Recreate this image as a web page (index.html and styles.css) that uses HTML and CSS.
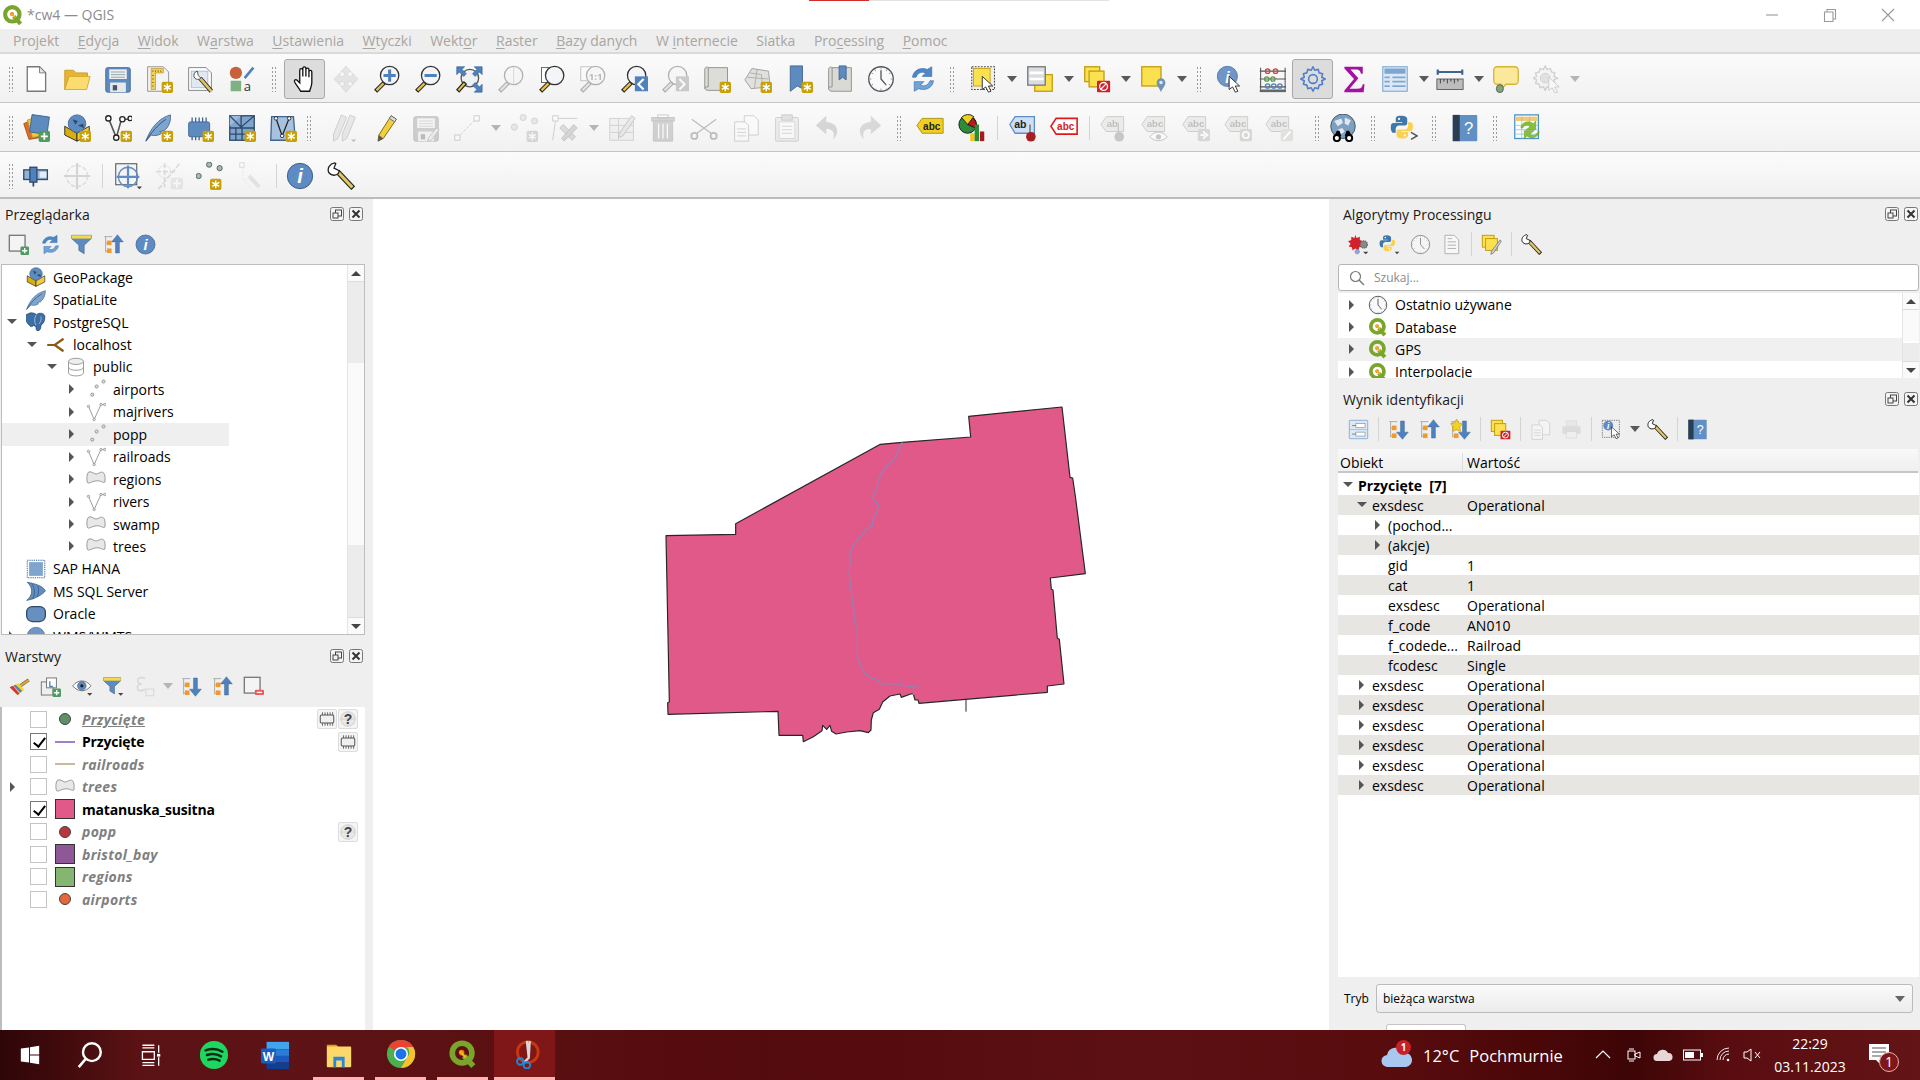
FILE: index.html
```html
<!DOCTYPE html>
<html lang="pl">
<head>
<meta charset="utf-8">
<title>*cw4 — QGIS</title>
<link rel="stylesheet" href="styles.css">
</head>
<body>
<svg class="defs" aria-hidden="true">
<defs>
<g id="bstar"><rect x="19" y="19" width="13" height="13" rx="2" fill="#c8a008"/><path d="M25.5 21v9M21.5 23.2l8 4.6M29.5 23.2l-8 4.6" stroke="#fff" stroke-width="1.7"/></g>
<g id="bplus"><rect x="19" y="19" width="13" height="13" rx="2" fill="#4f9a5e"/><path d="M25.5 21.5v8M21.5 25.5h8" stroke="#fff" stroke-width="2"/></g>
<g id="lensg"><path d="M13 20L3 30" stroke="#222" stroke-width="5"/><path d="M12 21L4 29" stroke="#e3c04f" stroke-width="2.6"/><circle cx="19" cy="12" r="10.5" fill="#f3f5f8" stroke="#333" stroke-width="1.5"/></g>
<g id="qlogo"><circle cx="15" cy="15" r="10.5" fill="none" stroke="#7aa52c" stroke-width="6"/><path d="M17 18l10 11" stroke="#7aa52c" stroke-width="6"/><circle cx="14.5" cy="14.5" r="3" fill="#ee7913"/><path d="M13 13l6 7" stroke="#f1b51e" stroke-width="2.5"/></g>

<symbol id="new" viewBox="0 0 32 32"><path d="M6 2h14l7 7v21H6z" fill="#fff" stroke="#777" stroke-width="1.5"/><path d="M20 2v7h7z" fill="#e6e6e6" stroke="#777"/></symbol>
<symbol id="open" viewBox="0 0 32 32"><path d="M2 28V6h10l3 3h13v6H6z" fill="#e7b531" stroke="#c79a20"/><path d="M2 28l5-15h24l-4 15z" fill="#fbdc6e" stroke="#d2a72c"/></symbol>
<symbol id="save" viewBox="0 0 32 32"><path d="M2 5a2 2 0 012-2h24a2 2 0 012 2v24a2 2 0 01-2 2H4a2 2 0 01-2-2z" fill="#5e8bbf" stroke="#3f6490"/><rect x="6" y="5" width="20" height="11" fill="#eef0f2"/><path d="M8 8h16M8 11h16M8 14h16" stroke="#8f98a3"/><rect x="7" y="20" width="18" height="11" fill="#e6e8ea"/><rect x="10" y="23" width="5" height="6" fill="#44566b"/></symbol>
<symbol id="layoutnew" viewBox="0 0 32 32"><path d="M3 2h18l6 6v22H3z" fill="#f4f4f4" stroke="#888"/><path d="M7 4h14v5H12v19H7z" fill="#f0cf5c" stroke="#b8962a" stroke-width=".8"/><path d="M9 6v2M12 6v2M15 6v2M18 6v2M8 12h2M8 16h2M8 20h2M8 24h2" stroke="#8a6f17"/><use href="#bstar"/></symbol>
<symbol id="layoutmgr" viewBox="0 0 32 32"><path d="M3 3h20l6 6v20H3z" fill="#fff" stroke="#777"/><rect x="6" y="7" width="19" height="19" fill="#dfe8f3" stroke="#a8b9cc"/><path d="M29 30L16 15" stroke="#333" stroke-width="5"/><path d="M29 30L16 15" stroke="#e3c660" stroke-width="3"/><path d="M13 7a5 5 0 00-3 8 5 5 0 007 0l-3-3z" fill="#fff" stroke="#444"/></symbol>
<symbol id="style" viewBox="0 0 32 32"><circle cx="9" cy="9" r="7" fill="#c8603a"/><path d="M19 15L29 3" stroke="#4f81bd" stroke-width="3"/><rect x="3" y="18" width="12" height="12" fill="#7fb083"/><text x="18" y="30" class="svt" font-size="15" fill="#333">a</text></symbol>
<symbol id="hand" viewBox="0 0 32 32"><path d="M11 30c-2-4-6-8-7-11-.6-2 1.5-3 3-1.5l3 3V6c0-2.5 3.5-2.5 3.5 0v7V4c0-2.5 3.5-2.5 3.5 0v9V5.5c0-2.5 3.5-2.5 3.5 0V14V8c0-2.5 3.3-2.5 3.3 0v12c0 4-1.5 6-2.5 10z" fill="#fff" stroke="#111" stroke-width="1.5"/></symbol>
<symbol id="pan" viewBox="0 0 32 32"><path d="M16 1l6 7h-4v5h5V9l7 7-7 7v-4h-5v5h4l-6 7-6-7h4v-5H9v4l-7-7 7-7v4h5V8h-4z" fill="#b8c6d6" stroke="#9aa7b5"/></symbol>
<symbol id="zin" viewBox="0 0 32 32"><use href="#lensg"/><path d="M19 5v14M12 12h14" stroke="#4f81bd" stroke-width="3.5"/></symbol>
<symbol id="zout" viewBox="0 0 32 32"><use href="#lensg"/><path d="M12 12h14" stroke="#4f81bd" stroke-width="3.5"/></symbol>
<symbol id="zfull" viewBox="0 0 32 32"><circle cx="17" cy="15" r="10" fill="#eef1f4" stroke="#555" stroke-width="1.5"/><path d="M12 20L3 30" stroke="#222" stroke-width="5"/><path d="M11 21L4 29" stroke="#e3c04f" stroke-width="2.5"/><path d="M2 2h9l-3 3 5 5-3 3-5-5-3 3zM31 2v9l-3-3-5 5-3-3 5-5-3-3zM31 31h-9l3-3-5-5 3-3 5 5 3-3z" fill="#4f81bd" stroke="#2f5e94" stroke-width=".7"/></symbol>
<symbol id="zsel" viewBox="0 0 32 32"><use href="#lensg"/><path d="M19 2v20" stroke="#999"/></symbol>
<symbol id="zlay" viewBox="0 0 32 32"><rect x="4" y="3" width="17" height="17" fill="#fff" stroke="#555"/><use href="#lensg"/></symbol>
<symbol id="z11" viewBox="0 0 32 32"><rect x="2" y="2" width="14" height="16" fill="#fff" stroke="#555"/><use href="#lensg"/><text x="19" y="17" text-anchor="middle" class="svt" font-size="11" font-weight="700" fill="#444">1:1</text></symbol>
<symbol id="zlast" viewBox="0 0 32 32"><use href="#lensg"/><rect x="17" y="13" width="15" height="17" fill="#4f81bd"/><path d="M27 16l-6 6 6 6" fill="none" stroke="#fff" stroke-width="2.5"/></symbol>
<symbol id="znext" viewBox="0 0 32 32"><use href="#lensg"/><rect x="17" y="13" width="15" height="17" fill="#4f81bd"/><path d="M21 16l6 6-6 6" fill="none" stroke="#fff" stroke-width="2.5"/></symbol>
<symbol id="map2d" viewBox="0 0 32 32"><path d="M2 5c0-3 4-3 4-2h22v26H6c-2 0-4-1-4-3z" fill="#dcdcd8" stroke="#8a8a86"/><path d="M6 3v22c-2 0-4 0-4 2" fill="none" stroke="#8a8a86"/><use href="#bstar"/></symbol>
<symbol id="map3d" viewBox="0 0 32 32"><path d="M9 4l19 3 2 18-22 2L1 17z" fill="#e0e0dc" stroke="#9a9a96"/><path d="M7 9l13 2 1 14M4 14l24 2M15 5l-3 21" stroke="#aaa" fill="none"/><use href="#bstar"/></symbol>
<symbol id="bmnew" viewBox="0 0 32 32"><path d="M6 1h14v26l-6-3-8 6z" fill="#5e8bbf" stroke="#3f6490"/><use href="#bstar"/></symbol>
<symbol id="bms" viewBox="0 0 32 32"><path d="M3 5c0-3 3-3 4-2h22v27H7c-2 0-4-1-4-3z" fill="#d9d9d5" stroke="#8a8a86"/><path d="M7 3v22c-2 0-4 0-4 2" fill="none" stroke="#8a8a86"/><path d="M15 1h8v16l-4-3-4 3z" fill="#5e8bbf" stroke="#3f6490"/></symbol>
<symbol id="clock" viewBox="0 0 32 32"><circle cx="16" cy="16" r="14" fill="#fafafa" stroke="#555" stroke-width="1.5"/><path d="M16 6v10l6 7" fill="none" stroke="#555" stroke-width="1.5"/><path d="M16 3v2M16 27v2M3 16h2M27 16h2M9 5l1 2M22 27l1 2M5 9l2 1M25 22l2 1M23 5l-1 2M10 27l-1 2M27 9l-2 1M7 22l-2 1" stroke="#6c96c6"/></symbol>
<symbol id="refresh" viewBox="0 0 32 32"><path d="M4 14C5 6 13 2 21 5l5-3v11H15l4-4C14 7 10 9 8 14z" fill="#4f88c4" stroke="#2f6aa8" stroke-width=".7"/><path d="M28 18c-1 8-9 12-17 9l-5 3V19h11l-4 4c5 2 9 0 11-5z" fill="#6fa4d8" stroke="#2f6aa8" stroke-width=".7"/></symbol>
<symbol id="select" viewBox="0 0 32 32"><rect x="2" y="2" width="26" height="26" fill="#eee" stroke="#444" stroke-dasharray="2 1.5" stroke-width="1.2"/><rect x="4" y="4" width="19" height="20" fill="#fbe14f" stroke="#c49c10"/><path d="M14 13v15l4-3 3 6 3-1-3-6h5z" fill="#fff" stroke="#222"/></symbol>
<symbol id="selattr" viewBox="0 0 32 32"><rect x="10" y="11" width="20" height="19" fill="#fbe14f" stroke="#c49c10" stroke-width="1.5"/><rect x="2" y="2" width="20" height="21" fill="#d9dde2" stroke="#777" stroke-width="1.5"/><path d="M4 9h16M4 16h16" stroke="#fff" stroke-width="3"/></symbol>
<symbol id="desel" viewBox="0 0 32 32"><rect x="2" y="2" width="17" height="17" fill="#fbe14f" stroke="#c49c10" stroke-width="1.5"/><rect x="7" y="7" width="17" height="18" fill="#fbe14f" stroke="#c49c10" stroke-width="1.5"/><rect x="16" y="18" width="15" height="13" rx="1" fill="#d0202a"/><circle cx="23.5" cy="24.5" r="4.5" fill="none" stroke="#fff" stroke-width="1.5"/><path d="M20 28l7-7" stroke="#fff" stroke-width="1.5"/></symbol>
<symbol id="selloc" viewBox="0 0 32 32"><rect x="2" y="2" width="22" height="22" fill="#fbe14f" stroke="#c49c10" stroke-width="1.5"/><path d="M24 31c-2-5-5-7-5-11a5 5 0 0110 0c0 4-3 6-5 11z" fill="#6f93b4"/><circle cx="24" cy="20" r="2" fill="#dfe8f0"/></symbol>
<symbol id="ident" viewBox="0 0 32 32"><circle cx="13" cy="13" r="11.5" fill="#6f96c6" stroke="#4f77a8"/><text x="13" y="20" text-anchor="middle" class="svs" font-size="18" font-style="italic" font-weight="700" fill="#fff">i</text><path d="M15 13v15l4-3 3 6 3-1-3-6h5z" fill="#fff" stroke="#222"/></symbol>
<symbol id="calc" viewBox="0 0 32 32"><rect x="2" y="28" width="30" height="3" fill="#666"/><path d="M3 28V3M31 28V3M2 7h30M2 16h30M2 25h30" stroke="#555" stroke-width="1.2"/><g fill="none" stroke-width="1.5"><circle cx="11" cy="7" r="2.5" stroke="#c44"/><circle cx="20" cy="7" r="2.5" stroke="#c44"/><circle cx="10" cy="16" r="2.5" stroke="#5a9a4d"/><circle cx="17" cy="16" r="2.5" stroke="#5a9a4d"/><circle cx="11" cy="24" r="2.5" stroke="#4f81bd"/><circle cx="18" cy="24" r="2.5" stroke="#4f81bd"/><circle cx="25" cy="24" r="2.5" stroke="#4f81bd"/></g></symbol>
<symbol id="gear" viewBox="0 0 32 32"><path d="M16 2l2 4 4-1 1 4 4 1-1 4 4 2-4 2 1 4-4 1-1 4-4-1-2 4-2-4-4 1-1-4-4-1 1-4-4-2 4-2-1-4 4-1 1-4 4 1z" fill="none" stroke="#4f81c9" stroke-width="1.8" stroke-linejoin="round"/><circle cx="16" cy="16" r="5" fill="none" stroke="#4f81c9" stroke-width="1.8"/></symbol>
<symbol id="sigma" viewBox="0 0 32 32"><path d="M5 2h21v8h-2c-1-4-2-5-6-5H12l9 10-10 12h9c4 0 5-1 6-5h2l-1 9H5v-2l11-13L5 4z" fill="#a3129e"/></symbol>
<symbol id="table" viewBox="0 0 32 32"><rect x="2" y="2" width="28" height="28" fill="#dce8f5" stroke="#7ea6cf" stroke-width="1.2"/><rect x="4" y="4" width="24" height="6" fill="#7ea6cf"/><path d="M4 14h6M13 14h15M4 19h6M13 19h15M4 24h6M13 24h15" stroke="#7ea6cf" stroke-width="2"/></symbol>
<symbol id="ruler" viewBox="0 0 32 32"><path d="M2 8h28M2 5v6M30 5v6" stroke="#3f6490" stroke-width="2.5"/><rect x="1" y="16" width="30" height="12" fill="#bdbdbd" stroke="#555"/><path d="M5 16v5M9 16v3M13 16v5M17 16v3M21 16v5M25 16v3" stroke="#333"/></symbol>
<symbol id="tip" viewBox="0 0 32 32"><path d="M6 2h20a4 4 0 014 4v12a4 4 0 01-4 4H16l-5 5v-5H6a4 4 0 01-4-4V6a4 4 0 014-4z" fill="#fbe89a" stroke="#d6b532" stroke-width="1.5"/><ellipse cx="9" cy="27" rx="4" ry="4.5" fill="#7fa878" stroke="#555"/></symbol>
<symbol id="actgear" viewBox="0 0 32 32"><path d="M14 1l2 4 4-1 1 4 4 1-1 4 4 2-4 2 1 4-4 1-1 4-4-1-2 4-2-4-4 1-1-4-4-1 1-4-4-2 4-2-1-4 4-1 1-4 4 1z" fill="#eee" stroke="#888" stroke-width="1.5"/><circle cx="14" cy="15" r="5.5" fill="#bbc" stroke="#888"/><path d="M18 14v15l4-3 3 6 3-1-3-6h5z" fill="#fff" stroke="#777"/></symbol>
<symbol id="dsm" viewBox="0 0 32 32"><path d="M2 11l14-6 4 22-12 2z" fill="#d9702a" stroke="#a54d16"/><path d="M6 7l15-5 4 22-13 3z" fill="#f1c644" stroke="#bb9420"/><rect x="10" y="2" width="20" height="20" transform="rotate(8 20 12)" fill="#5e8bbf" stroke="#3f6490"/><use href="#bplus"/></symbol>
<symbol id="gpknew" viewBox="0 0 32 32"><path d="M2 14l14 8v9L2 24z" fill="#d8ad10" stroke="#222"/><path d="M30 14l-14 8v9l14-7z" fill="#f0cb3a" stroke="#222"/><circle cx="16" cy="11" r="10" fill="#5e8bbf" stroke="#3f6490"/><path d="M11 6l6 2-3 4zM17 13l6-2 1 5z" fill="#2d4a6b"/><use href="#bstar"/></symbol>
<symbol id="vline" viewBox="0 0 32 32"><path d="M6 7l8 20L20 6h10" fill="none" stroke="#555" stroke-width="1.8"/><circle cx="5" cy="5" r="3" fill="#fff" stroke="#222" stroke-width="1.5"/><circle cx="14" cy="27" r="3" fill="#fff" stroke="#222" stroke-width="1.5"/><circle cx="21" cy="6" r="3" fill="#fff" stroke="#222" stroke-width="1.5"/><circle cx="30" cy="5" r="2.5" fill="#fff" stroke="#222" stroke-width="1.5"/><use href="#bstar"/></symbol>
<symbol id="feather" viewBox="0 0 32 32"><path d="M1 31C6 17 15 5 29 1c1 8-3 15-7 18l-5 1 2 2c-4 3-9 3-12 2z" fill="#7fa5cf" stroke="#3f6490"/><path d="M1 31C8 20 15 12 24 6" fill="none" stroke="#2d4a6b"/><use href="#bstar"/></symbol>
<symbol id="chip" viewBox="0 0 32 32"><rect x="3" y="9" width="24" height="17" rx="2" fill="#5e8bbf" stroke="#3f6490"/><path d="M7 4v5M11 4v5M15 4v5M19 4v5M23 4v5M7 26v4M11 26v4M15 26v4" stroke="#3f6490" stroke-width="1.5"/><use href="#bstar"/></symbol>
<symbol id="mesh" viewBox="0 0 32 32"><rect x="2" y="2" width="28" height="28" fill="#7fa5cf" stroke="#2d4a6b" stroke-width="1.5"/><path d="M2 2h13L2 14z" fill="#9dbbdb"/><path d="M2 2l13 13L30 2M15 2v13M2 16h28M16 16v14M9 16v14M2 23h28" stroke="#2d4a6b" stroke-width="1.5" fill="none"/><use href="#bstar"/></symbol>
<symbol id="vpoly" viewBox="0 0 32 32"><path d="M3 3h25l2 27H2z" fill="#a7c2df" stroke="#3f6490" stroke-width="1.5"/><path d="M8 5l7 20L23 5" fill="none" stroke="#222" stroke-width="1.5"/><circle cx="8" cy="5" r="2" fill="#fff" stroke="#222"/><circle cx="23" cy="5" r="2" fill="#fff" stroke="#222"/><circle cx="15" cy="25" r="2" fill="#fff" stroke="#222"/><use href="#bstar"/></symbol>
<symbol id="pencil" viewBox="0 0 32 32"><path d="M23 2l6 4-15 22-6 3 1-7z" fill="#f2cf3c" stroke="#6d5a10"/><path d="M23 2l6 4-2 3-6-4z" fill="#ddd" stroke="#666"/><path d="M9 24l5 4-6 3z" fill="#555"/></symbol>
<symbol id="pencils" viewBox="0 0 32 32"><path d="M13 1l6 3-10 24-5 3 0-8z" fill="#ccc" stroke="#777"/><path d="M23 1l6 3-10 24-5 3 0-8z" fill="#ccc" stroke="#777"/><path d="M24 29l3 3 3-3z" fill="#555"/></symbol>
<symbol id="saveed" viewBox="0 0 32 32"><use href="#save" width="32" height="32"/><path d="M28 16l3 2-9 12-4 1 1-4z" fill="#ddd" stroke="#666"/></symbol>
<symbol id="digiline" viewBox="0 0 32 32"><path d="M5 27L27 5" stroke="#777" stroke-dasharray="3 2"/><rect x="2" y="24" width="6" height="6" fill="#fff" stroke="#777"/><rect x="24" y="2" width="6" height="6" fill="#fff" stroke="#777"/></symbol>
<symbol id="points" viewBox="0 0 32 32"><g fill="#ccc" stroke="#888"><circle cx="15" cy="4" r="3.5"/><circle cx="28" cy="8" r="3.5"/><circle cx="5" cy="15" r="3.5"/></g><use href="#bstar"/></symbol>
<symbol id="vtool" viewBox="0 0 32 32"><rect x="2" y="2" width="6" height="6" fill="#fff" stroke="#777"/><path d="M5 8L2 30M8 5h22" stroke="#777"/><path d="M10 16l14 14 4-4L14 12z" fill="#aaa" stroke="#666"/><path d="M26 12L12 28l3 3 15-15z" fill="#999" stroke="#666"/></symbol>
<symbol id="tabpen" viewBox="0 0 32 32"><rect x="2" y="5" width="27" height="25" fill="#e8e4da" stroke="#8a8a80"/><path d="M2 13h27M2 21h27M12 5v25" stroke="#8a8a80"/><path d="M27 2l4 3-14 20-5 2 1-5z" fill="#ccc" stroke="#666"/></symbol>
<symbol id="trash" viewBox="0 0 32 32"><rect x="3" y="4" width="26" height="4" fill="#b88" stroke="#866"/><rect x="10" y="1" width="12" height="4" fill="none" stroke="#866"/><path d="M5 8h22v23H5z" fill="#a87" stroke="#765"/><path d="M11 11v17M16 11v17M21 11v17" stroke="#fff" stroke-width="1.5"/></symbol>
<symbol id="scis" viewBox="0 0 32 32"><path d="M2 6l22 16M30 6L8 22" stroke="#555" stroke-width="1.5"/><circle cx="5" cy="25" r="3.5" fill="none" stroke="#555" stroke-width="2"/><circle cx="27" cy="25" r="3.5" fill="none" stroke="#555" stroke-width="2"/></symbol>
<symbol id="copy" viewBox="0 0 32 32"><path d="M14 2h11l5 5v17H14z" fill="#fff" stroke="#777"/><path d="M3 9h12l4 4v18H3z" fill="#fff" stroke="#777"/><path d="M6 17h10M6 21h10M6 25h10" stroke="#888"/></symbol>
<symbol id="paste" viewBox="0 0 32 32"><rect x="3" y="4" width="26" height="27" rx="1" fill="#ddd" stroke="#777"/><rect x="10" y="1" width="12" height="6" fill="#bbb" stroke="#777"/><rect x="7" y="9" width="18" height="19" fill="#fff" stroke="#999"/><path d="M10 14h12M10 18h12M10 22h12" stroke="#888"/></symbol>
<symbol id="undo" viewBox="0 0 32 32"><path d="M14 2L2 13l12 10v-6c7 0 10 3 8 12 7-6 7-19-8-20z" fill="#a5988a"/></symbol>
<symbol id="redo" viewBox="0 0 32 32"><path d="M18 2l12 11-12 10v-6c-7 0-10 3-8 12-7-6-7-19 8-20z" fill="#a0a597"/></symbol>
<symbol id="abcy" viewBox="0 0 32 32"><path d="M7 5h24v17H7L1 13z" fill="#f1cf1f" stroke="#a58a10"/><text x="18" y="18" text-anchor="middle" class="svs" font-size="11.5" font-weight="700" fill="#222">abc</text></symbol>
<symbol id="pie" viewBox="0 0 32 32"><circle cx="11" cy="12" r="10" fill="#2e8b3a" stroke="#111"/><path d="M11 12V2a10 10 0 019 14z" fill="#b8191d" stroke="#111"/><path d="M11 12L4 4a10 10 0 0114-1z" fill="#f0d01c" stroke="#111"/><rect x="14" y="22" width="5" height="9" fill="#f5c518"/><rect x="19" y="12" width="5" height="19" fill="#2e8b3a"/><rect x="25" y="20" width="5" height="11" fill="#a8191d"/></symbol>
<symbol id="abpin" viewBox="0 0 32 32"><path d="M7 3h22v19H7L1 12z" fill="#cfe0f4" stroke="#5e8bc9" stroke-width="1.5"/><text x="13" y="16" text-anchor="middle" class="svs" font-size="12" font-weight="700" fill="#222">ab</text><path d="M24 12v10" stroke="#666" stroke-width="1.5"/><circle cx="25" cy="26" r="5.5" fill="#a52022"/></symbol>
<symbol id="abcr" viewBox="0 0 32 32"><path d="M7 5h24v18H7L1 14z" fill="#fff" stroke="#e01818" stroke-width="1.8"/><text x="18" y="18.5" text-anchor="middle" class="svs" font-size="11.5" font-weight="700" fill="#e01818">abc</text></symbol>
<symbol id="abg1" viewBox="0 0 32 32"><path d="M7 3h20v17H7L1 12z" fill="#e6e4dc" stroke="#aaa"/><text x="14" y="15" text-anchor="middle" class="svs" font-size="11" font-weight="700" fill="#999">ab</text><path d="M21 10v12" stroke="#aaa" stroke-width="1.5"/><circle cx="22" cy="26" r="5.5" fill="#aaa"/></symbol>
<symbol id="abg2" viewBox="0 0 32 32"><path d="M7 3h20v17H7L1 12z" fill="#e6e4dc" stroke="#aaa"/><text x="16" y="15" text-anchor="middle" class="svs" font-size="11" font-weight="700" fill="#999">abc</text><path d="M10 26c6-7 14-7 20 0-6 6-14 6-20 0z" fill="#fff" stroke="#999"/><circle cx="20" cy="26" r="3" fill="#aaa"/></symbol>
<symbol id="abg3" viewBox="0 0 32 32"><path d="M7 3h20v17H7L1 12z" fill="#e6e4dc" stroke="#aaa"/><text x="16" y="15" text-anchor="middle" class="svs" font-size="11" font-weight="700" fill="#999">abc</text><rect x="18" y="17" width="14" height="14" rx="2" fill="#c4c4c0"/><path d="M21 24h5M24 20l5 4-5 4" fill="none" stroke="#fff" stroke-width="2.2"/></symbol>
<symbol id="abg4" viewBox="0 0 32 32"><path d="M7 3h20v17H7L1 12z" fill="#e6e4dc" stroke="#aaa"/><text x="16" y="15" text-anchor="middle" class="svs" font-size="11" font-weight="700" fill="#999">abc</text><rect x="18" y="17" width="14" height="14" rx="2" fill="#c4c4c0"/><circle cx="25" cy="24" r="3.5" fill="none" stroke="#fff" stroke-width="2"/></symbol>
<symbol id="abg5" viewBox="0 0 32 32"><path d="M7 3h20v17H7L1 12z" fill="#e6e4dc" stroke="#aaa"/><text x="16" y="15" text-anchor="middle" class="svs" font-size="11" font-weight="700" fill="#999">abc</text><rect x="18" y="17" width="14" height="14" rx="2" fill="#d4d4d0"/><path d="M21 29l8-9" stroke="#fff" stroke-width="2.5"/></symbol>
<symbol id="globe" viewBox="0 0 32 32"><circle cx="16" cy="14" r="14" fill="#7f9fc0" stroke="#3d4f63"/><path d="M6 8l8-3 2 5-6 4zM18 4l7 3-3 6-4-2zM10 18l5-2 3 4-4 3z" fill="#dfe8f1"/><circle cx="9" cy="27.5" r="3.5" fill="#fff" stroke="#000" stroke-width="2.2"/><circle cx="23" cy="27.5" r="3.5" fill="#fff" stroke="#000" stroke-width="2.2"/><path d="M6 25l3-6h3l2 6zM18 25l2-6h3l3 6z" fill="#000"/></symbol>
<symbol id="python" viewBox="0 0 32 32"><path d="M13 2c-5 0-6 2-6 4v4h8v1H4c-3 0-3 4-3 6s1 6 3 6h3v-5c0-2 2-4 4-4h7c2 0 3-1 3-3V6c0-2-2-4-8-4z" fill="#3f78ab"/><path d="M15 30c5 0 7-2 7-4v-4h-8v-1h11c2 0 3-3 3-6s-1-5-3-5h-3v5c0 2-2 4-4 4h-7c-2 0-3 1-3 3v4c0 2 2 4 7 4z" fill="#fbd24f"/><circle cx="11" cy="6" r="1.3" fill="#fff"/><circle cx="18" cy="26" r="1.3" fill="#fff"/></symbol>
<symbol id="pyb" viewBox="0 0 32 32"><use href="#python" width="30" height="30"/><path d="M24 21l7 4-7 4" fill="none" stroke="#555" stroke-width="1.8"/></symbol>
<symbol id="help" viewBox="0 0 32 32"><rect x="2" y="1" width="28" height="30" rx="1" fill="#6090c4"/><rect x="2" y="1" width="8" height="30" fill="#2b3d51"/><text x="20" y="23" text-anchor="middle" class="svs" font-size="19" fill="#fff">?</text></symbol>
<symbol id="sync" viewBox="0 0 32 32"><rect x="2" y="1" width="27" height="27" fill="#fff" stroke="#4c94c6" stroke-width="1.5"/><rect x="3" y="3" width="25" height="5" fill="#f1c97a"/><path d="M3 13h25M3 18h25M3 23h25M10 3v25M19 3v25" stroke="#9cc3de"/><path d="M9 16c1-7 9-9 14-5l3-3v10H15l5-4c-3-2-7-2-9 2z" fill="#85c13a" stroke="#5e9a1c" stroke-width=".6"/><path d="M30 20c-1 7-9 9-14 5l-3 3V19h11l-5 4c3 2 7 2 9-2z" fill="#85c13a" stroke="#5e9a1c" stroke-width=".6"/></symbol>
<symbol id="focus" viewBox="0 0 32 32"><rect x="2" y="9" width="27" height="11" fill="#8fb2d6" stroke="#2d4a6b" stroke-width="1.5"/><rect x="9" y="6" width="8" height="17" fill="#4f81bd" stroke="#2d4a6b" stroke-width="1.5"/><path d="M13 23v5" stroke="#2d4a6b" stroke-width="2"/><rect x="20" y="11" width="8" height="7" fill="#e4ecf5"/></symbol>
<symbol id="cross" viewBox="0 0 32 32"><circle cx="16" cy="16" r="12" fill="none" stroke="#aaa" stroke-dasharray="5 2" stroke-width="1.5"/><path d="M16 1v30M1 16h30" stroke="#999" stroke-width="2.5"/></symbol>
<symbol id="proj" viewBox="0 0 32 32"><rect x="2" y="2" width="24" height="24" fill="#f4f4f4" stroke="#555" stroke-width="1.2"/><circle cx="16" cy="17" r="11" fill="none" stroke="#5e8bc9" stroke-width="1.5"/><path d="M3 17h26M16 4v26" stroke="#5e8bc9" stroke-width="2.5"/><path d="M26 28h6l-3 3z" fill="#444"/></symbol>
<symbol id="crossp" viewBox="0 0 32 32"><path d="M11 1v28M1 11h22M28 2L4 31" stroke="#aaa" stroke-width="2" stroke-dasharray="6 2"/><circle cx="11" cy="11" r="7" fill="none" stroke="#bbb"/><rect x="18" y="18" width="14" height="13" rx="2" fill="#c8c8c8"/><path d="M25 20v9M20.5 24.5h9" stroke="#fff" stroke-width="2"/></symbol>
<symbol id="ptstar" viewBox="0 0 32 32"><g fill="#9ec29b" stroke="#557"><circle cx="15" cy="3" r="3"/><circle cx="27" cy="7" r="3"/><circle cx="3" cy="16" r="3"/></g><use href="#bstar" transform="translate(-3,0)"/></symbol>
<symbol id="pathtool" viewBox="0 0 32 32"><rect x="2" y="1" width="5" height="5" fill="#fff" stroke="#999"/><path d="M5 6l1 14 8 9M8 20h3" stroke="#bbb" stroke-dasharray="2 2" fill="none"/><path d="M14 14l12 13-3 3-12-12z" fill="#c4c0b8"/></symbol>
<symbol id="info" viewBox="0 0 32 32"><circle cx="16" cy="16" r="14.5" fill="#5e8bc4" stroke="#34587f"/><text x="16" y="24" text-anchor="middle" class="svs" font-size="23" font-style="italic" font-weight="700" fill="#fff">i</text></symbol>
<symbol id="wrench" viewBox="0 0 32 32"><path d="M30 30L12 11" stroke="#222" stroke-width="6"/><path d="M29 29L13 12" stroke="#e2c763" stroke-width="3.5"/><path d="M9 1C3 2 0 7 2 12c3 4 8 4 11 1l1-3-6-3 2-5z" fill="#fff" stroke="#222" stroke-width="1.5"/></symbol>

<symbol id="addgrp" viewBox="0 0 32 32"><rect x="2" y="2" width="24" height="24" fill="#f4f4f4" stroke="#777" stroke-width="2"/><use href="#bplus"/></symbol>
<symbol id="filter" viewBox="0 0 32 32"><path d="M1 2h30v5L20 17v13l-8-5v-8L1 7z" fill="#5e8bbf" stroke="#3f6490"/><rect x="1" y="2" width="30" height="5" fill="#f5d94a"/></symbol>
<symbol id="collapse" viewBox="0 0 32 32"><path d="M2 4h12M4 4v24M4 14h8M4 26h8" stroke="#aaa" stroke-width="1.5" fill="none"/><rect x="6" y="10" width="7" height="7" fill="#f19a2c"/><rect x="6" y="22" width="7" height="7" fill="#f19a2c"/><path d="M22 1l9 11h-6v17h-6V12h-6z" fill="#4f81bd" stroke="#2f5e94" stroke-width=".6"/></symbol>
<symbol id="expand" viewBox="0 0 32 32"><path d="M2 4h12M4 4v24M4 14h8M4 26h8" stroke="#aaa" stroke-width="1.5" fill="none"/><rect x="6" y="10" width="7" height="7" fill="#f19a2c"/><rect x="6" y="22" width="7" height="7" fill="#f19a2c"/><path d="M22 31l9-11h-6V3h-6v17h-6z" fill="#4f81bd" stroke="#2f5e94" stroke-width=".6"/></symbol>
<symbol id="expstar" viewBox="0 0 32 32"><use href="#expand" width="32" height="32"/><path d="M10 0l3 6 6 1-4 5 1 7-6-3-6 3 1-7-4-5 6-1z" fill="#f7d21c" stroke="#c49c10"/></symbol>
<symbol id="brush" viewBox="0 0 32 32"><path d="M17 15L30 6" stroke="#8a6a1a" stroke-width="5"/><path d="M17 15L30 6" stroke="#d1a94a" stroke-width="3"/><path d="M1 17l14-6 8 10-10 8z" fill="#f1cf3c"/><path d="M1 17l5-2 10 12-3 2z" fill="#d9353a"/><path d="M7 14.5l3-1.3 10 9.8-3 2.5z" fill="#4f81bd"/></symbol>
<symbol id="addleg" viewBox="0 0 32 32"><rect x="2" y="9" width="18" height="20" fill="#eee" stroke="#777" stroke-width="1.5"/><rect x="10" y="3" width="15" height="15" fill="#fff" stroke="#777" stroke-width="1.5"/><path d="M15 8v8h5" fill="none" stroke="#4f81bd" stroke-width="2"/><use href="#bplus"/></symbol>
<symbol id="eye" viewBox="0 0 32 32"><path d="M1 15c8-10 20-10 28 0-8 10-20 10-28 0z" fill="#fff" stroke="#777" stroke-width="1.5"/><circle cx="15" cy="15" r="6.5" fill="#5e8bbf" stroke="#3f6490"/><circle cx="15" cy="15" r="2.5" fill="#222"/><path d="M23 26h8l-4 4z" fill="#444"/></symbol>
<symbol id="filterd" viewBox="0 0 32 32"><use href="#filter" width="28" height="30"/><path d="M23 26h8l-4 4z" fill="#444"/></symbol>
<symbol id="epsil" viewBox="0 0 32 32"><path d="M17 4C9 0 5 4 6 8c0 3 3 4 6 4-5 0-7 3-7 6 0 5 7 6 12 2" fill="none" stroke="#aaa" stroke-width="2.2"/><rect x="18" y="20" width="12" height="10" fill="none" stroke="#bbb" stroke-width="2"/></symbol>
<symbol id="remgrp" viewBox="0 0 32 32"><rect x="2" y="2" width="24" height="24" fill="#f4f4f4" stroke="#777" stroke-width="2"/><rect x="18" y="21" width="14" height="8" rx="1.5" fill="#ef5a5f"/><path d="M21 25h8" stroke="#fff" stroke-width="2"/></symbol>
<symbol id="gears" viewBox="0 0 32 32"><path d="M11 1l2 5 5-2 0 5 5 2-4 4 3 4-5 1-1 5-5-3-4 3-1-5-5-1 3-4-4-4 5-2 0-5 5 2z" fill="#d4202a"/><circle cx="24" cy="16" r="5.5" fill="#888" stroke="#666" stroke-dasharray="2 1" stroke-width="2"/><circle cx="14" cy="27" r="3.5" fill="#88a8d8" stroke="#6f8fc0" stroke-dasharray="2 1"/><path d="M23 27h8l-4 4z" fill="#444"/></symbol>
<symbol id="pyd" viewBox="0 0 32 32"><use href="#python" width="28" height="28"/><path d="M24 27h7l-3.5 4z" fill="#444"/></symbol>
<symbol id="doc" viewBox="0 0 32 32"><path d="M6 2h14l7 7v21H6z" fill="#fff" stroke="#888" stroke-width="1.5"/><path d="M10 12h13M10 17h13M10 22h13M10 7h7" stroke="#888" stroke-width="1.5"/></symbol>
<symbol id="editnote" viewBox="0 0 32 32"><rect x="2" y="2" width="18" height="18" fill="#fbe14f" stroke="#c49c10" stroke-width="1.5"/><rect x="7" y="7" width="18" height="18" fill="#fbe14f" stroke="#c49c10" stroke-width="1.5"/><path d="M29 9l2 2-12 18-4 2 1-5z" fill="#ccc" stroke="#666"/></symbol>
<symbol id="treeview" viewBox="0 0 32 32"><rect x="2" y="2" width="28" height="28" rx="1" fill="#dce8f5" stroke="#8fb0d2" stroke-width="1.5"/><path d="M2 16h28" stroke="#8fb0d2"/><rect x="12" y="7" width="14" height="6" fill="#fff" stroke="#7e8f9f"/><rect x="12" y="20" width="14" height="6" fill="#fff" stroke="#7e8f9f"/><path d="M6 10h6M6 23h6" stroke="#555"/></symbol>
<symbol id="printer" viewBox="0 0 32 32"><rect x="8" y="3" width="16" height="8" fill="#ddd" stroke="#aaa"/><rect x="2" y="11" width="28" height="12" rx="2" fill="#bbb"/><rect x="8" y="19" width="16" height="10" fill="#eee" stroke="#aaa"/></symbol>
<symbol id="idsel" viewBox="0 0 32 32"><rect x="2" y="2" width="26" height="26" fill="#eee" stroke="#444" stroke-dasharray="2 1.5"/><circle cx="11" cy="10" r="7.5" fill="#5e8bc4"/><text x="11" y="15" text-anchor="middle" class="svs" font-size="13" font-style="italic" font-weight="700" fill="#fff">i</text><path d="M16 12v15l4-3 3 6 3-1-3-6h5z" fill="#fff" stroke="#222"/></symbol>

<symbol id="t-gpkg" viewBox="0 0 32 32"><path d="M2 14l14 8v9L2 24z" fill="#d8ad10" stroke="#222"/><path d="M30 14l-14 8v9l14-7z" fill="#f0cb3a" stroke="#222"/><circle cx="16" cy="11" r="10" fill="#5e8bbf" stroke="#3f6490"/><path d="M11 6l6 2-3 4zM17 13l6-2 1 5z" fill="#2d4a6b"/></symbol>
<symbol id="t-feather" viewBox="0 0 32 32"><path d="M1 31C6 17 15 5 31 1c0 9-4 15-8 18l-5 1 2 2c-4 3-9 3-12 2z" fill="#7fa5cf" stroke="#3f6490"/><path d="M1 31C8 20 15 12 26 6" fill="none" stroke="#2d4a6b"/></symbol>
<symbol id="t-pg" viewBox="0 0 32 32"><path d="M3 3c6-4 12 0 14 1 4-3 11-3 13 2 1 7-2 13-6 15 0 4-1 9-5 9-3 0-3-4-3-7-2 0-3-1-4-2-1 3-5 3-6 1-4-3-7-9-7-14 0-3 2-5 4-5z" fill="#3d6ea4" stroke="#1f3a5c"/><path d="M17 4c-4 5-4 12-1 17M24 7c1 5-1 9-3 12" fill="none" stroke="#cfe0f0"/></symbol>
<symbol id="t-conn" viewBox="0 0 32 32"><path d="M2 16h12L28 6M14 16l14 10" fill="none" stroke="#8a5a12" stroke-width="3.5"/></symbol>
<symbol id="t-db" viewBox="0 0 32 32"><ellipse cx="16" cy="7" rx="12" ry="5" fill="#eee" stroke="#999" stroke-width="1.5"/><path d="M4 7v18c0 7 24 7 24 0V7M4 16c0 7 24 7 24 0" fill="none" stroke="#999" stroke-width="1.5"/></symbol>
<symbol id="t-pt" viewBox="0 0 32 32"><g fill="#ddd" stroke="#888" stroke-width="1.3"><circle cx="28" cy="4" r="2.5"/><circle cx="17" cy="12" r="2.5"/><circle cx="10" cy="25" r="2.5"/></g></symbol>
<symbol id="t-ln" viewBox="0 0 32 32"><path d="M4 7l9 21L24 4h6" fill="none" stroke="#888" stroke-width="1.3"/><g fill="#ddd" stroke="#888"><circle cx="4" cy="7" r="2"/><circle cx="13" cy="28" r="2"/><circle cx="24" cy="4" r="2"/><circle cx="30" cy="4" r="2"/></g></symbol>
<symbol id="t-pol" viewBox="0 0 32 32"><path d="M4 5c6-2 8 3 12 3s8-5 12-2c3 2 3 12 2 15-3 2-6-3-14-2S4 25 2 21C1 16 1 8 4 5z" fill="#e8e8e8" stroke="#888" stroke-width="1.3"/></symbol>
<symbol id="t-sap" viewBox="0 0 32 32"><rect x="2" y="2" width="28" height="28" fill="none" stroke="#2f5e94" stroke-dasharray="2 1.5" stroke-width="1.5"/><rect x="5" y="5" width="22" height="22" fill="#7fa5cf"/></symbol>
<symbol id="t-ms" viewBox="0 0 32 32"><path d="M2 2c12 2 26 6 29 14C26 22 14 29 1 31c5-4 8-9 8-15S6 6 2 2z" fill="#5f8fc1" stroke="#2d4a6b"/><path d="M9 4c5 5 6 17 2 25M19 8c2 6 1 13-1 17" fill="none" stroke="#2d4a6b"/></symbol>
<symbol id="t-ora" viewBox="0 0 32 32"><rect x="1" y="4" width="30" height="24" rx="9" fill="#6790c0" stroke="#2d4a6b" stroke-width="2"/></symbol>
<symbol id="t-wms" viewBox="0 0 32 32"><circle cx="16" cy="16" r="14" fill="#6f96c6" stroke="#3f6490"/></symbol>
<symbol id="qsmall" viewBox="0 0 32 32"><use href="#qlogo"/></symbol>
<symbol id="chipb" viewBox="0 0 32 32"><rect x="4" y="9" width="24" height="14" rx="2" fill="#f0f0f0" stroke="#555" stroke-width="1.8"/><path d="M8 4v5M12.5 4v5M17 4v5M21.5 4v5M26 4v5M8 23v5M12.5 23v5M17 23v5M21.5 23v5M26 23v5" stroke="#555" stroke-width="1.5"/></symbol>
<symbol id="unkn" viewBox="0 0 32 32"><circle cx="16" cy="16" r="13" fill="#e8e8e8" stroke="#bbb"/><path d="M3 16h26M16 3v26" stroke="#c4c4c4"/><text x="16" y="25" text-anchor="middle" class="svs" font-size="25" font-weight="700" fill="#444">?</text></symbol>
<symbol id="floatb" viewBox="0 0 14 14"><rect x=".5" y=".5" width="13" height="13" rx="2" fill="#f4f4f4" stroke="#777"/><rect x="5.5" y="3" width="6" height="6" fill="none" stroke="#444"/><rect x="3" y="6" width="5" height="5" fill="#f4f4f4" stroke="#444"/></symbol>
<symbol id="closeb" viewBox="0 0 14 14"><rect x=".5" y=".5" width="13" height="13" rx="2" fill="#f4f4f4" stroke="#777"/><path d="M3.5 3.5l7 7M10.5 3.5l-7 7" stroke="#333" stroke-width="2"/></symbol>
</defs>
</svg>

<header class="titlebar">
  <svg class="t-logo" viewBox="0 0 32 32"><use href="#qlogo"/></svg>
  <span class="t-name">*cw4 — QGIS</span>
  <span class="t-prog"></span>
  <span class="winbtns">
    <svg class="wb" viewBox="0 0 14 14"><path d="M1 7h12" stroke="#999" stroke-width="1.1"/></svg>
    <svg class="wb" viewBox="0 0 14 14"><path d="M1.5 4h8.5v9.5H1.5zM4 4V1.5h8.5V11H10" fill="none" stroke="#999" stroke-width="1.1"/></svg>
    <svg class="wb" viewBox="0 0 14 14"><path d="M1 1l12 12M13 1L1 13" stroke="#999" stroke-width="1.1"/></svg>
  </span>
</header>

<nav class="menubar">
  <span>Projekt</span><span><u>E</u>dycja</span><span><u>W</u>idok</span><span>W<u>a</u>rstwa</span><span><u>U</u>stawienia</span><span><u>W</u>tyczki</span><span>Wekt<u>o</u>r</span><span><u>R</u>aster</span><span><u>B</u>azy danych</span><span>W <u>i</u>nternecie</span><span>Siatka</span><span>Pro<u>c</u>essing</span><span><u>P</u>omoc</span>
</nav>

<div class="toolbar">
  <i class="gr g10"></i>
  <b class="b"><svg><use href="#new"/></svg></b><b class="b"><svg><use href="#open"/></svg></b><b class="b"><svg><use href="#save"/></svg></b><b class="b"><svg><use href="#layoutnew"/></svg></b><b class="b"><svg><use href="#layoutmgr"/></svg></b><b class="b"><svg><use href="#style"/></svg></b>
  <i class="gr g22"></i>
  <b class="b on"><svg><use href="#hand"/></svg></b><b class="b off"><svg><use href="#pan"/></svg></b><b class="b"><svg><use href="#zin"/></svg></b><b class="b"><svg><use href="#zout"/></svg></b><b class="b"><svg><use href="#zfull"/></svg></b><b class="b off"><svg><use href="#zsel"/></svg></b><b class="b"><svg><use href="#zlay"/></svg></b><b class="b off"><svg><use href="#z11"/></svg></b><b class="b"><svg><use href="#zlast"/></svg></b><b class="b off"><svg><use href="#znext"/></svg></b><b class="b"><svg><use href="#map2d"/></svg></b><b class="b"><svg><use href="#map3d"/></svg></b><b class="b"><svg><use href="#bmnew"/></svg></b><b class="b"><svg><use href="#bms"/></svg></b><b class="b"><svg><use href="#clock"/></svg></b><b class="b"><svg><use href="#refresh"/></svg></b>
  <i class="gr g20"></i>
  <b class="b"><svg><use href="#select"/></svg></b><i class="ar"></i><b class="b"><svg><use href="#selattr"/></svg></b><i class="ar"></i><b class="b"><svg><use href="#desel"/></svg></b><i class="ar"></i><b class="b"><svg><use href="#selloc"/></svg></b><i class="ar"></i>
  <i class="gr g20b"></i>
  <b class="b"><svg><use href="#ident"/></svg></b><b class="b"><svg><use href="#calc"/></svg></b><b class="b on"><svg><use href="#gear"/></svg></b><b class="b"><svg><use href="#sigma"/></svg></b><b class="b"><svg><use href="#table"/></svg></b><i class="ar w14"></i><b class="b"><svg><use href="#ruler"/></svg></b><i class="ar w14"></i><b class="b"><svg><use href="#tip"/></svg></b><b class="b off"><svg><use href="#actgear"/></svg></b><i class="ar dim"></i>
</div>

<div class="toolbar">
  <i class="gr g10"></i>
  <b class="b"><svg><use href="#dsm"/></svg></b><b class="b"><svg><use href="#gpknew"/></svg></b><b class="b"><svg><use href="#vline"/></svg></b><b class="b"><svg><use href="#feather"/></svg></b><b class="b"><svg><use href="#chip"/></svg></b><b class="b"><svg><use href="#mesh"/></svg></b><b class="b"><svg><use href="#vpoly"/></svg></b>
  <i class="gr g19"></i>
  <b class="b off"><svg><use href="#pencils"/></svg></b><b class="b"><svg><use href="#pencil"/></svg></b><b class="b off"><svg><use href="#saveed"/></svg></b><b class="b off"><svg><use href="#digiline"/></svg></b><i class="ar dim"></i><b class="b off"><svg><use href="#points"/></svg></b><b class="b off"><svg><use href="#vtool"/></svg></b><i class="ar dim"></i><b class="b off"><svg><use href="#tabpen"/></svg></b><b class="b off"><svg><use href="#trash"/></svg></b><b class="b off"><svg><use href="#scis"/></svg></b><b class="b off"><svg><use href="#copy"/></svg></b><b class="b off"><svg><use href="#paste"/></svg></b><b class="b off"><svg><use href="#undo"/></svg></b><b class="b off"><svg><use href="#redo"/></svg></b>
  <i class="gr g20"></i>
  <b class="b"><svg><use href="#abcy"/></svg></b><b class="b"><svg><use href="#pie"/></svg></b><i class="sp s10"></i><b class="b"><svg><use href="#abpin"/></svg></b><b class="b"><svg><use href="#abcr"/></svg></b><i class="sp s9"></i><b class="b lt"><svg><use href="#abg1"/></svg></b><b class="b lt"><svg><use href="#abg2"/></svg></b><b class="b lt"><svg><use href="#abg3"/></svg></b><b class="b lt"><svg><use href="#abg4"/></svg></b><b class="b lt"><svg><use href="#abg5"/></svg></b>
  <i class="gr g23"></i>
  <b class="b"><svg><use href="#globe"/></svg></b><i class="gr g20"></i><b class="b"><svg><use href="#pyb"/></svg></b><i class="gr g20"></i><b class="b"><svg><use href="#help"/></svg></b><i class="gr g20"></i><b class="b"><svg><use href="#sync"/></svg></b>
</div>

<div class="toolbar last">
  <i class="gr g10"></i>
  <b class="b"><svg><use href="#focus"/></svg></b><b class="b off"><svg><use href="#cross"/></svg></b><i class="sp s10"></i><b class="b"><svg><use href="#proj"/></svg></b><b class="b off"><svg><use href="#crossp"/></svg></b><b class="b"><svg><use href="#ptstar"/></svg></b><b class="b off"><svg><use href="#pathtool"/></svg></b><i class="sp s7"></i><b class="b"><svg><use href="#info"/></svg></b><b class="b"><svg><use href="#wrench"/></svg></b>
</div>

<main class="main">
  <aside class="dock left">
    <section class="browser">
      <div class="dtitle"><span>Przeglądarka</span><span class="dbtns"><svg><use href="#floatb"/></svg><svg><use href="#closeb"/></svg></span></div>
      <div class="dtools br"><b class="db"><svg><use href="#addgrp"/></svg></b><b class="db"><svg><use href="#refresh"/></svg></b><b class="db"><svg><use href="#filter"/></svg></b><b class="db"><svg><use href="#collapse"/></svg></b><b class="db"><svg><use href="#info"/></svg></b></div>
      <div class="btree">
        <div class="btree-body">
          <div class="row"><i class="arw"></i><svg class="ico"><use href="#t-gpkg"/></svg><span>GeoPackage</span></div>
          <div class="row"><i class="arw"></i><svg class="ico"><use href="#t-feather"/></svg><span>SpatiaLite</span></div>
          <div class="row"><i class="arw dn"></i><svg class="ico"><use href="#t-pg"/></svg><span>PostgreSQL</span></div>
          <div class="row l1"><i class="arw dn"></i><svg class="ico"><use href="#t-conn"/></svg><span>localhost</span></div>
          <div class="row l2"><i class="arw dn"></i><svg class="ico"><use href="#t-db"/></svg><span>public</span></div>
          <div class="row l3"><i class="arw rt"></i><svg class="ico"><use href="#t-pt"/></svg><span>airports</span></div>
          <div class="row l3"><i class="arw rt"></i><svg class="ico"><use href="#t-ln"/></svg><span>majrivers</span></div>
          <div class="row l3 hov"><i class="arw rt"></i><svg class="ico"><use href="#t-pt"/></svg><span>popp</span></div>
          <div class="row l3"><i class="arw rt"></i><svg class="ico"><use href="#t-ln"/></svg><span>railroads</span></div>
          <div class="row l3"><i class="arw rt"></i><svg class="ico"><use href="#t-pol"/></svg><span>regions</span></div>
          <div class="row l3"><i class="arw rt"></i><svg class="ico"><use href="#t-ln"/></svg><span>rivers</span></div>
          <div class="row l3"><i class="arw rt"></i><svg class="ico"><use href="#t-pol"/></svg><span>swamp</span></div>
          <div class="row l3"><i class="arw rt"></i><svg class="ico"><use href="#t-pol"/></svg><span>trees</span></div>
          <div class="row"><i class="arw"></i><svg class="ico"><use href="#t-sap"/></svg><span>SAP HANA</span></div>
          <div class="row"><i class="arw"></i><svg class="ico"><use href="#t-ms"/></svg><span>MS SQL Server</span></div>
          <div class="row"><i class="arw"></i><svg class="ico"><use href="#t-ora"/></svg><span>Oracle</span></div>
          <div class="row"><i class="arw rt"></i><svg class="ico"><use href="#t-wms"/></svg><span>WMS/WMTS</span></div>
        </div>
        <div class="sbar">
          <i class="sb-btn up"></i><i class="sb-h h1"></i><i class="sb-t"></i><i class="sb-h h2"></i><i class="sb-btn down"></i>
        </div>
      </div>
    </section>
    <div class="split"></div>
    <section class="layers">
      <div class="dtitle"><span>Warstwy</span><span class="dbtns"><svg><use href="#floatb"/></svg><svg><use href="#closeb"/></svg></span></div>
      <div class="dtools ly"><b class="db"><svg><use href="#brush"/></svg></b><b class="db"><svg><use href="#addleg"/></svg></b><b class="db"><svg><use href="#eye"/></svg></b><b class="db"><svg><use href="#filterd"/></svg></b><b class="db off"><svg><use href="#epsil"/></svg></b><i class="ar dim w15"></i><b class="db"><svg><use href="#expand"/></svg></b><b class="db"><svg><use href="#collapse"/></svg></b><b class="db"><svg><use href="#remgrp"/></svg></b></div>
      <div class="ltree">
        <div class="lrow"><i class="arw"></i><i class="chk"></i><svg class="sym"><circle cx="10" cy="10" r="5.5" fill="#5d8f68" stroke="#444"/></svg><span class="lname u">Przycięte</span><span class="badges"><b class="bdg"><svg><use href="#chipb"/></svg></b><b class="bdg"><svg><use href="#unkn"/></svg></b></span></div>
        <div class="lrow"><i class="arw"></i><i class="chk tick"></i><svg class="sym"><path d="M0 10h20" stroke="#9d80c6" stroke-width="2"/></svg><span class="lname act">Przycięte</span><span class="badges"><b class="bdg"><svg><use href="#chipb"/></svg></b></span></div>
        <div class="lrow"><i class="arw"></i><i class="chk"></i><svg class="sym"><path d="M0 10h20" stroke="#c6b99c" stroke-width="2"/></svg><span class="lname">railroads</span></div>
        <div class="lrow"><i class="arw rt"></i><i class="chk"></i><svg class="sym"><use href="#t-pol"/></svg><span class="lname">trees</span></div>
        <div class="lrow"><i class="arw"></i><i class="chk tick"></i><svg class="sym"><rect x=".5" y=".5" width="19" height="19" fill="#e15989" stroke="#333"/></svg><span class="lname act">matanuska_susitna</span></div>
        <div class="lrow"><i class="arw"></i><i class="chk"></i><svg class="sym"><circle cx="10" cy="10" r="5.5" fill="#b7373c" stroke="#444"/></svg><span class="lname">popp</span><span class="badges"><b class="bdg"><svg><use href="#unkn"/></svg></b></span></div>
        <div class="lrow"><i class="arw"></i><i class="chk"></i><svg class="sym"><rect x=".5" y=".5" width="19" height="19" fill="#8e5796" stroke="#333"/></svg><span class="lname">bristol_bay</span></div>
        <div class="lrow"><i class="arw"></i><i class="chk"></i><svg class="sym"><rect x=".5" y=".5" width="19" height="19" fill="#85b66f" stroke="#333"/></svg><span class="lname">regions</span></div>
        <div class="lrow"><i class="arw"></i><i class="chk"></i><svg class="sym"><circle cx="10" cy="10" r="5.5" fill="#e5653c" stroke="#444"/></svg><span class="lname">airports</span></div>
      </div>
    </section>
  </aside>

  <section class="canvas">
    <svg class="mapsvg" viewBox="-831 -573 2868 2493">
      <path class="poly" d="M48 437L257 433L257 401L691 163L757 157L962 141L956 79L1236 51L1260 262L1268 264L1276 318L1306 551L1201 564L1204 598L1209 600L1222 745L1228 748L1242 882L1192 888L1192 907L807 940L804 930L795 930L790 912L782 912L754 922L750 912L720 918L698 936L688 958L670 968L664 990L663 1020L655 1028L630 1022L590 1026L558 1032L545 1024L540 1006L530 1018L518 1006L516 1022L490 1040L460 1055L458 1036L387 1036L384 964L54 973L53 938L58 936Z"/>
      <path class="river" d="M757 157L748 175L738 200L715 225L698 245L685 270L680 295L668 325L686 345L678 372L668 390L668 405L648 420L626 445L612 465L600 490L600 525L597 550L602 590L608 640L612 660L612 690L622 715L622 800L635 835L652 858L685 872L695 882L745 882L790 892L805 888M790 892L790 915"/>
      <path class="stick" d="M948 930V965"/>
    </svg>
  </section>

  <aside class="dock right">
    <section class="proc">
      <div class="dtitle"><span>Algorytmy Processingu</span><span class="dbtns"><svg><use href="#floatb"/></svg><svg><use href="#closeb"/></svg></span></div>
      <div class="dtools rt1"><b class="dr"><svg><use href="#gears"/></svg></b><b class="dr"><svg><use href="#pyd"/></svg></b><b class="dr lt"><svg><use href="#clock"/></svg></b><b class="dr lt"><svg><use href="#doc"/></svg></b><i class="sp s9"></i><b class="dr"><svg><use href="#editnote"/></svg></b><i class="sp s9"></i><b class="dr"><svg><use href="#wrench"/></svg></b></div>
      <div class="search"><svg class="s-ico" viewBox="0 0 16 16"><circle cx="6.5" cy="6.5" r="5" fill="none" stroke="#777" stroke-width="1.2"/><path d="M10 10l5 5" stroke="#777" stroke-width="1.4"/></svg><span>Szukaj...</span></div>
      <div class="ptree">
        <div class="ptree-body">
          <div class="prow"><i class="arw rt"></i><svg class="ico lt"><use href="#clock"/></svg><span>Ostatnio używane</span></div>
          <div class="prow"><i class="arw rt"></i><svg class="ico"><use href="#qsmall"/></svg><span>Database</span></div>
          <div class="prow hovall"><i class="arw rt"></i><svg class="ico"><use href="#qsmall"/></svg><span>GPS</span></div>
          <div class="prow"><i class="arw rt"></i><svg class="ico"><use href="#qsmall"/></svg><span>Interpolacje</span></div>
        </div>
        <div class="sbar">
          <i class="sb-btn up"></i><i class="sb-t t1"></i><i class="sb-h h3"></i><i class="sb-btn down"></i>
        </div>
      </div>
    </section>
    <div class="split"></div>
    <section class="identify">
      <div class="dtitle"><span>Wynik identyfikacji</span><span class="dbtns"><svg><use href="#floatb"/></svg><svg><use href="#closeb"/></svg></span></div>
      <div class="dtools rt2"><b class="dr"><svg><use href="#treeview"/></svg></b><i class="sp s9"></i><b class="dr"><svg><use href="#expand"/></svg></b><b class="dr"><svg><use href="#collapse"/></svg></b><b class="dr"><svg><use href="#expstar"/></svg></b><i class="sp s9"></i><b class="dr"><svg><use href="#desel"/></svg></b><i class="sp s9"></i><b class="dr off"><svg><use href="#copy"/></svg></b><b class="dr off"><svg><use href="#printer"/></svg></b><i class="sp s9"></i><b class="dr"><svg><use href="#idsel"/></svg></b><i class="ar w15"></i><b class="dr"><svg><use href="#wrench"/></svg></b><i class="sp s9"></i><b class="dr"><svg><use href="#help"/></svg></b></div>
      <div class="ihead"><span class="c1">Obiekt</span><span class="c2">Wartość</span></div>
      <div class="itree">
        <div class="irow root"><span class="c1 n0"><i class="arw dn"></i>Przycięte&nbsp; [7]</span></div>
        <div class="irow alt"><span class="c1 n1"><i class="arw dn"></i>exsdesc</span><span class="c2">Operational</span></div>
        <div class="irow"><span class="c1 n2"><i class="arw rt"></i>(pochod...</span></div>
        <div class="irow alt"><span class="c1 n2"><i class="arw rt"></i>(akcje)</span></div>
        <div class="irow"><span class="c1 n2"><i class="arw"></i>gid</span><span class="c2">1</span></div>
        <div class="irow alt"><span class="c1 n2"><i class="arw"></i>cat</span><span class="c2">1</span></div>
        <div class="irow"><span class="c1 n2"><i class="arw"></i>exsdesc</span><span class="c2">Operational</span></div>
        <div class="irow alt"><span class="c1 n2"><i class="arw"></i>f_code</span><span class="c2">AN010</span></div>
        <div class="irow"><span class="c1 n2"><i class="arw"></i>f_codede...</span><span class="c2">Railroad</span></div>
        <div class="irow alt"><span class="c1 n2"><i class="arw"></i>fcodesc</span><span class="c2">Single</span></div>
        <div class="irow"><span class="c1 n1"><i class="arw rt"></i>exsdesc</span><span class="c2">Operational</span></div>
        <div class="irow alt"><span class="c1 n1"><i class="arw rt"></i>exsdesc</span><span class="c2">Operational</span></div>
        <div class="irow"><span class="c1 n1"><i class="arw rt"></i>exsdesc</span><span class="c2">Operational</span></div>
        <div class="irow alt"><span class="c1 n1"><i class="arw rt"></i>exsdesc</span><span class="c2">Operational</span></div>
        <div class="irow"><span class="c1 n1"><i class="arw rt"></i>exsdesc</span><span class="c2">Operational</span></div>
        <div class="irow alt"><span class="c1 n1"><i class="arw rt"></i>exsdesc</span><span class="c2">Operational</span></div>
      </div>
      <div class="mode"><span class="mlabel">Tryb</span><div class="combo"><span>bieżąca warstwa</span><i class="ar cmb"></i></div></div>
      <div class="cutbtn"></div>
    </section>
  </aside>
</main>

<footer class="taskbar">
  <svg class="tk winlogo" viewBox="0 0 24 24"><path d="M2 5l9-1.3v8.800H2zM12 3.500l10-1.500v9.500H12zM2 12.500h9v7.800l-9-1.300zM12 12.500h10V22l-10-1.500z" fill="#fff"/></svg>
  <svg class="tk srch" viewBox="0 0 32 32"><circle cx="18" cy="13" r="9.5" fill="none" stroke="#fff" stroke-width="2.6"/><path d="M11.5 20L4 29" stroke="#fff" stroke-width="2.8"/></svg>
  <svg class="tk tview" viewBox="0 0 24 24"><path d="M5 3h11M5 5.5h11M5 9h11v7H5zM5 19h11M5 21.5h11M20 3v7M20 14v8" fill="none" stroke="#fff" stroke-width="1.2"/><rect x="18.5" y="11" width="3" height="2.5" fill="#fff"/></svg>
  <svg class="tk spot" viewBox="0 0 32 32"><circle cx="16" cy="16" r="15" fill="#1ed760"/><path d="M7 11c6-2 13-1.5 18 1.500M8.500 16c5-1.500 11-1 15 1.500M10 21c4-1 9-.5 12 1" fill="none" stroke="#0b2a14" stroke-width="2.6" stroke-linecap="round"/></svg>
  <svg class="tk word" viewBox="0 0 32 32"><rect x="7" y="2" width="24" height="8" fill="#41a5ee"/><rect x="7" y="10" width="24" height="7" fill="#2b7cd3"/><rect x="7" y="17" width="24" height="7" fill="#185abd"/><rect x="7" y="24" width="24" height="7" fill="#103f91"/><rect x="1" y="9" width="16" height="16" rx="1.5" fill="#1a5dbf"/><text x="9" y="22" text-anchor="middle" class="svs" font-size="13" font-weight="700" fill="#fff">W</text></svg>
  <span class="tkw"><svg class="tk" viewBox="0 0 32 32"><path d="M3 6h10l3 3H3z" fill="#e3a008"/><rect x="3" y="8" width="26" height="22" rx="1" fill="#fcd76a"/><path d="M10 30V19h12v11h-3v-7h-6v7z" fill="#2b88d8"/></svg></span>
  <span class="tkw"><svg class="tk" viewBox="0 0 32 32"><circle cx="16" cy="16" r="15" fill="#4caf50"/><path d="M16 1a15 15 0 0113 7.500H16a7.500 7.500 0 00-6.500 3.700L3 8A15 15 0 0116 1z" fill="#ea4335"/><path d="M29 8.500A15 15 0 0116 31l6.500-11.300a7.500 7.500 0 000-11.200z" fill="#fbc02d"/><circle cx="16" cy="16" r="7.5" fill="#fff"/><circle cx="16" cy="16" r="5.8" fill="#1a73e8"/></svg></span>
  <span class="tkw"><svg class="tk" viewBox="0 0 32 32"><use href="#qlogo"/></svg></span>
  <span class="tkw active"><svg class="tk" viewBox="0 0 32 32"><circle cx="19" cy="14" r="11" fill="none" stroke="#c8380f" stroke-width="3"/><path d="M18 2l2 18-6 6M21 2l-1 18" stroke="#d8d8d8" stroke-width="2.5" fill="none"/><circle cx="11" cy="24" r="3.5" fill="none" stroke="#1e88d8" stroke-width="2"/><circle cx="18" cy="28" r="3.5" fill="none" stroke="#1e88d8" stroke-width="2"/></svg></span>
  <div class="tray">
    <span class="cloud"><svg viewBox="0 0 32 24"><path d="M7 22a6 6 0 01-1-12 9 9 0 0117-2 7 7 0 012 14z" fill="#a8c8f0"/></svg><b class="cbadge">1</b></span>
    <span class="weather"><span>12°C</span><span>Pochmurnie</span></span>
    <svg class="tr car" viewBox="0 0 16 16"><path d="M1 11l7-7 7 7" fill="none" stroke="#fff" stroke-width="1.2"/></svg>
    <svg class="tr mt" viewBox="0 0 16 16"><rect x="2" y="4" width="7" height="8" fill="none" stroke="#fff"/><path d="M9 7l5-2v6l-5-2z" fill="none" stroke="#fff"/><path d="M3 2h5M3 14h5" stroke="#fff"/></svg>
    <svg class="tr od" viewBox="0 0 20 14"><path d="M4 13a3.5 3.5 0 010-7 6 6 0 0111-1 4 4 0 011 8z" fill="#e8d6d6"/></svg>
    <svg class="tr bat" viewBox="0 0 20 12"><rect x=".5" y="1" width="17" height="10" fill="none" stroke="#fff"/><rect x="2" y="3" width="9" height="6" fill="#fff"/><rect x="18" y="4" width="2" height="4" fill="#fff"/></svg>
    <svg class="tr wifi" viewBox="0 0 16 16"><path d="M1 13a12 12 0 0112-12M4 13a9 9 0 019-9M7 13a6 6 0 016-6" fill="none" stroke="#fff" stroke-width=".9"/><circle cx="12" cy="13" r="1.3" fill="#fff"/></svg>
    <svg class="tr snd" viewBox="0 0 18 16"><path d="M1 5h3l4-3v12l-4-3H1z" fill="none" stroke="#fff"/><path d="M12 5l5 6M17 5l-5 6" stroke="#fff"/></svg>
    <span class="clock"><span>22:29</span><span>03.11.2023</span></span>
    <span class="notif"><svg viewBox="0 0 20 20"><path d="M0 0h20v16H10v3l-3-3H0z" fill="#fff"/><path d="M3 4h14M3 8h14M3 12h9" stroke="#555" stroke-width="1.2"/></svg><b class="nbadge">1</b></span>
  </div>
</footer>
</body>
</html>
```

FILE: styles.css
```css
* { box-sizing: border-box; }
html, body { margin: 0; padding: 0; }
body {
  width: 1920px; height: 1080px; overflow: hidden;
  display: flex; flex-direction: column;
  background: #efefef; color: #000;
  font-family: "Open Sans", "Noto Sans", sans-serif; font-size: 14px;
}
.defs { position: absolute; width: 0; height: 0; }
.svt { font-family: "Open Sans", sans-serif; }
.svs { font-family: "Liberation Sans", sans-serif; }
svg { display: block; flex: none; }
i, b { font-style: normal; font-weight: normal; display: block; flex: none; }

/* title bar */
.titlebar { height: 29px; flex: none; background: #fff; display: flex; align-items: center; padding-left: 2px; position: relative; }
.t-logo { width: 22px; height: 22px; margin-top: 1px; }
.t-name { margin-left: 3px; color: #8c8c8c; font-size: 14px; }
.t-prog { position: absolute; left: 809px; top: 0; width: 60px; height: 1px; background: #d12c2c; box-shadow: 60px 0 0 #e2e2e2, 120px 0 0 #e2e2e2, 180px 0 0 #e2e2e2, 240px 0 0 #e2e2e2; }
.winbtns { margin-left: auto; display: flex; gap: 44px; padding-right: 25px; }
.wb { width: 14px; height: 14px; }

/* menu */
.menubar { height: 25px; flex: none; background: #eeeeee; border-bottom: 2px solid #dadada; display: flex; align-items: center; padding-left: 13px; gap: 18.5px; color: #a9a5a1; font-size: 14px; }
.menubar u { text-decoration-thickness: 1px; text-underline-offset: 2px; }

/* toolbars */
.toolbar { height: 49px; flex: none; display: flex; align-items: center; padding: 2px 0 0 5px; background: linear-gradient(#fbfbfb, #f1f1f1); border-bottom: 1px solid #c4c4c4; }
.toolbar.last { height: 47px; border-bottom: 2px solid #bcbcbc; }
.b { width: 41.2px; height: 40px; display: flex; align-items: center; justify-content: center; border: 1px solid transparent; border-radius: 3px; }
.b svg { width: 28px; height: 28px; }
.b.on { background: #dcdcdc; border-color: #a9a9a9; }
.off svg { filter: grayscale(1); opacity: .35; }
.lt svg { filter: grayscale(.6); opacity: .6; }
.gr { height: 26px; background-image: radial-gradient(circle, #9a9a9a .8px, transparent 1.1px); background-size: 3px 4px; background-repeat: repeat; background-clip: content-box; }
.g10 { width: 10px; padding: 0 2px 0 2px; }
.g19 { width: 20px; padding: 0 12px 0 3px; }
.g20 { width: 20px; padding: 0 7px; }
.g20b { width: 20px; padding: 0 8px 0 6px; }
.g22 { width: 22px; padding: 0 8px; }
.g23 { width: 23px; padding: 0 3px 0 14px; }
.ar { width: 15.5px; height: 8px; position: relative; }
.ar::after { content: ""; position: absolute; left: 3px; top: 1px; border: 5px solid transparent; border-top: 6px solid #5a5a5a; border-bottom: 0; }
.ar.dim::after { border-top-color: #b5b5b5; }
.w15 { width: 15px; }
.w14 { width: 14px; }
.sp { height: 24px; position: relative; }
.sp::after { content: ""; position: absolute; left: 50%; top: 0; bottom: 0; width: 1px; background: #d4d4d4; }
.s7 { width: 7px; }
.s9 { width: 9px; }
.s10 { width: 10px; }

/* main */
.main { flex: 1; min-height: 0; display: flex; }
.dock { display: flex; flex-direction: column; min-height: 0; }
.left { width: 365px; margin-right: 8px; }
.right { width: 591px; padding-left: 9px; }
.canvas { width: 956px; background: #fff; position: relative; overflow: hidden; }
.mapsvg { position: absolute; left: 0; top: 0; width: 956px; height: 831px; }
.poly { fill: #e15989; stroke: #262626; stroke-width: 3.5; stroke-linejoin: round; }
.river { fill: none; stroke: #8a84bd; stroke-width: 3.5; }
.stick { stroke: #262626; stroke-width: 3; fill: none; }

.dtitle { height: 32px; flex: none; display: flex; align-items: center; justify-content: space-between; padding: 0 0 2px 5px; font-size: 14px; color: #1a1a1a; }
.right .dtitle { padding-left: 5px; }
.dbtns { display: flex; gap: 5px; padding-right: 2px; }
.dbtns svg { width: 14px; height: 14px; margin-top: -1px; }
.dtools { height: 26px; flex: none; display: flex; align-items: center; margin-bottom: 7px; }
.db { width: 31.6px; height: 26px; display: flex; align-items: center; justify-content: center; }
.db svg, .dr svg { width: 21px; height: 21px; }
.dr { width: 31px; height: 26px; display: flex; align-items: center; justify-content: center; }
.br { padding-left: 3px; }
.ly { padding-left: 4px; margin-bottom: 8px; }
.ly .db { width: 31.3px; }
.rt1 { padding-left: 4.5px; }
.rt2 { padding-left: 4.5px; }

.split { height: 6px; flex: none; }

/* browser */
.browser { flex: none; }
.btree { height: 371px; display: flex; background: #fff; border: 1px solid #bdbdbd; margin-left: 1px; overflow: hidden; }
.btree-body { flex: 1; min-width: 0; overflow: hidden; padding-top: 1px; }
.row { height: 22.45px; display: flex; align-items: center; font-size: 14px; width: 100%; }
.row.hov { background: #efefef; width: 227px; }
.l1 { padding-left: 20px; }
.l2 { padding-left: 40px; }
.l3 { padding-left: 60px; }
.arw { width: 20px; height: 10px; position: relative; }
.arw.dn::after { content: ""; position: absolute; left: 5px; top: 2px; border: 5px solid transparent; border-top: 5px solid #555; border-bottom: 0; }
.arw.rt::after { content: ""; position: absolute; left: 7px; top: 0; border: 5px solid transparent; border-left: 5px solid #555; border-right: 0; }
.ico { width: 20px; height: 20px; margin: 0 7px 0 4px; }
.sbar { width: 17px; flex: none; display: flex; flex-direction: column; background: #fff; border-left: 1px solid #e4e4e4; }
.sb-btn { height: 17px; flex: none; position: relative; background: #fafafa; border-bottom: 1px solid #ddd; }
.sb-btn.up::after { content: ""; position: absolute; left: 3px; top: 6px; border: 5px solid transparent; border-bottom: 5px solid #444; border-top: 0; }
.sb-btn.down { border-bottom: 0; border-top: 1px solid #ddd; }
.sb-btn.down::after { content: ""; position: absolute; left: 3px; top: 6px; border: 5px solid transparent; border-top: 5px solid #444; border-bottom: 0; }
.sb-h { background: #ececec; flex: none; }
.h1 { height: 81px; }
.h2 { height: 72px; }
.h3 { height: 18px; margin-top: 2px; }
.sb-t { flex: 1; background: #fafafa; }
.t1 { flex: 1; }

/* layers */
.layers { flex: 1; min-height: 0; display: flex; flex-direction: column; }
.ltree { flex: 1; background: #fff; border-left: 2px solid #bdbdbd; padding-top: 1px; }
.lrow { height: 22.5px; display: flex; align-items: center; padding-right: 7px; margin-left: -1px; }
.lrow .arw.rt::after { left: 9px; }
.chk { width: 17px; height: 17px; margin-left: 9px; background: #fff; border: 1px solid #c4c4c4; position: relative; }
.chk.tick { border-color: #777; }
.chk.tick::after { content: ""; position: absolute; left: 5px; top: 1px; width: 5px; height: 10px; border: solid #000; border-width: 0 2px 2px 0; transform: rotate(38deg); }
.sym { width: 20px; height: 20px; margin: 0 7px 0 8px; }
.lname { font-weight: 700; font-style: italic; color: #808080; font-size: 14px; letter-spacing: .3px; }
.lname.act { font-style: normal; color: #000; letter-spacing: -.2px; }
.lname.u { text-decoration: underline; }
.badges { margin-left: auto; display: flex; gap: 1px; }
.bdg { width: 20px; height: 20px; border: 1px solid #ddd; border-radius: 2px; background: #f4f4f4; display: flex; align-items: center; justify-content: center; }
.bdg svg { width: 18px; height: 18px; }

/* processing */
.proc { flex: none; }
.search { height: 27px; display: flex; align-items: center; background: #fff; border: 1px solid #b5b5b5; border-radius: 3px; padding-left: 10px; color: #8a8a8a; font-size: 12px; margin-right: 1px; }
.s-ico { width: 16px; height: 16px; margin-right: 9px; }
.ptree { height: 85px; margin-top: 2px; display: flex; background: #fff; overflow: hidden; margin-right: 1px; }
.ptree-body { flex: 1; min-width: 0; overflow: hidden; padding-top: .5px; }
.prow { height: 22.4px; display: flex; align-items: center; font-size: 14px; padding-left: 4px; }
.prow .ico { margin: 0 7px 0 6px; width: 20px; height: 20px; }
.prow.hovall { background: #f0f0f0; }

/* identify */
.identify { flex: 1; min-height: 0; display: flex; flex-direction: column; overflow: hidden; }
.ihead { height: 24px; flex: none; display: flex; align-items: center; padding-top: 4px; background: linear-gradient(#f9f9f9, #efefef); border-bottom: 2px solid #c6c6c6; font-size: 14px; margin-right: 2px; }
.ihead .c1 { border-right: 1px solid #ddd; height: 100%; display: flex; align-items: center; padding-left: 2px; }
.c1 { width: 125px; flex: none; white-space: nowrap; overflow: hidden; display: flex; align-items: center; }
.c2 { padding-left: 4px; white-space: nowrap; }
.itree { flex: 1; min-height: 0; background: #fff; padding-top: 2px; margin-right: 1px; }
.irow { height: 20px; display: flex; align-items: center; font-size: 14px; }
.irow.alt { background: #e8e6e3; }
.irow.root { font-weight: 700; }
.c1 .arw { width: 16px; }
.c1 .arw.dn::after { left: 1px; }
.c1 .arw.rt::after { left: 3px; }
.n0 { padding-left: 4px; }
.n0 .arw { width: 16px; }
.n1 { padding-left: 18px; }
.n2 { padding-left: 34px; }
.mode { height: 29px; flex: none; display: flex; align-items: center; margin-top: 7px; padding-right: 7px; }
.mlabel { width: 38px; padding-left: 6px; font-size: 12px; }
.combo { flex: 1; height: 29px; display: flex; align-items: center; justify-content: space-between; padding-left: 6px; font-size: 12px; background: linear-gradient(#fafafa, #ececec); border: 1px solid #bbb; border-radius: 3px; }
.ar.cmb { width: 20px; }
.ar.cmb::after { border-top-color: #666; }
.cutbtn { width: 80px; height: 6px; margin: 11px 0 0 48px; flex: none; background: #fff; border: 1px solid #c4c4c4; border-bottom: 0; border-radius: 3px 3px 0 0; }

/* taskbar */
.taskbar { height: 50px; flex: none; position: relative; display: flex; align-items: center; color: #fff; background: linear-gradient(90deg, #2f0608 0, #3f0a0c 3%, #5a1214 7%, #5e1316 14%, #5a0f11 28%, #540b0d 40%, #5c1013 60%, #590c0e 72%, #4a0708 80%, #3d0506 85%, #5a0d10 90%, #621416 100%); overflow: hidden; }
.tk { width: 28px; height: 28px; }
.winlogo { margin-left: 19px; width: 22px; height: 22px; }
.srch { margin-left: 34px; width: 30px; height: 30px; }
.tview { margin-left: 32px; width: 26px; height: 26px; }
.spot { margin-left: 36px; width: 30px; height: 30px; }
.word { margin-left: 31px; width: 30px; height: 30px; }
.tkw { width: 51px; height: 50px; display: flex; align-items: center; justify-content: center; border-bottom: 3px solid #ffb3b3; flex: none; margin-right: 11px; }
.tkw:nth-of-type(1) { margin-left: 23px; }
.tkw .tk { width: 30px; height: 30px; }
.tkw.active { width: 61px; background: #7f1719; margin-left: -5px; margin-right: 0; }
.tray { position: absolute; left: 0; top: 0; width: 1920px; height: 50px; pointer-events: none; }
.cloud { position: absolute; left: 1381px; top: 10px; width: 32px; height: 28px; }
.cloud svg { width: 32px; height: 24px; margin-top: 5px; }
.cbadge { position: absolute; left: 15px; top: 0; width: 15px; height: 15px; border-radius: 50%; background: #c8202a; font-size: 10px; line-height: 15px; text-align: center; font-weight: 700; }
.weather { position: absolute; left: 1423px; top: 0; height: 50px; display: flex; align-items: center; gap: 10px; font-size: 16.5px; }
.tr { position: absolute; top: 17px; }
.car { left: 1595px; width: 16px; height: 16px; }
.mt { left: 1626px; width: 16px; height: 16px; }
.od { left: 1653px; top: 18px; width: 20px; height: 14px; }
.bat { left: 1683px; top: 19px; width: 20px; height: 12px; }
.wifi { left: 1716px; width: 16px; height: 16px; }
.snd { left: 1743px; width: 18px; height: 16px; }
.clock { position: absolute; left: 1770px; top: 0; width: 80px; height: 50px; display: flex; flex-direction: column; align-items: center; justify-content: center; gap: 5px; font-size: 14px; line-height: 18px; }
.notif { position: absolute; left: 1869px; top: 14px; width: 34px; height: 34px; }
.notif svg { width: 20px; height: 20px; }
.nbadge { position: absolute; left: 10px; top: 8px; width: 20px; height: 20px; border-radius: 50%; background: #7f1719; border: 1px solid #e8b0b0; font-size: 14px; line-height: 18px; text-align: center; }
```
